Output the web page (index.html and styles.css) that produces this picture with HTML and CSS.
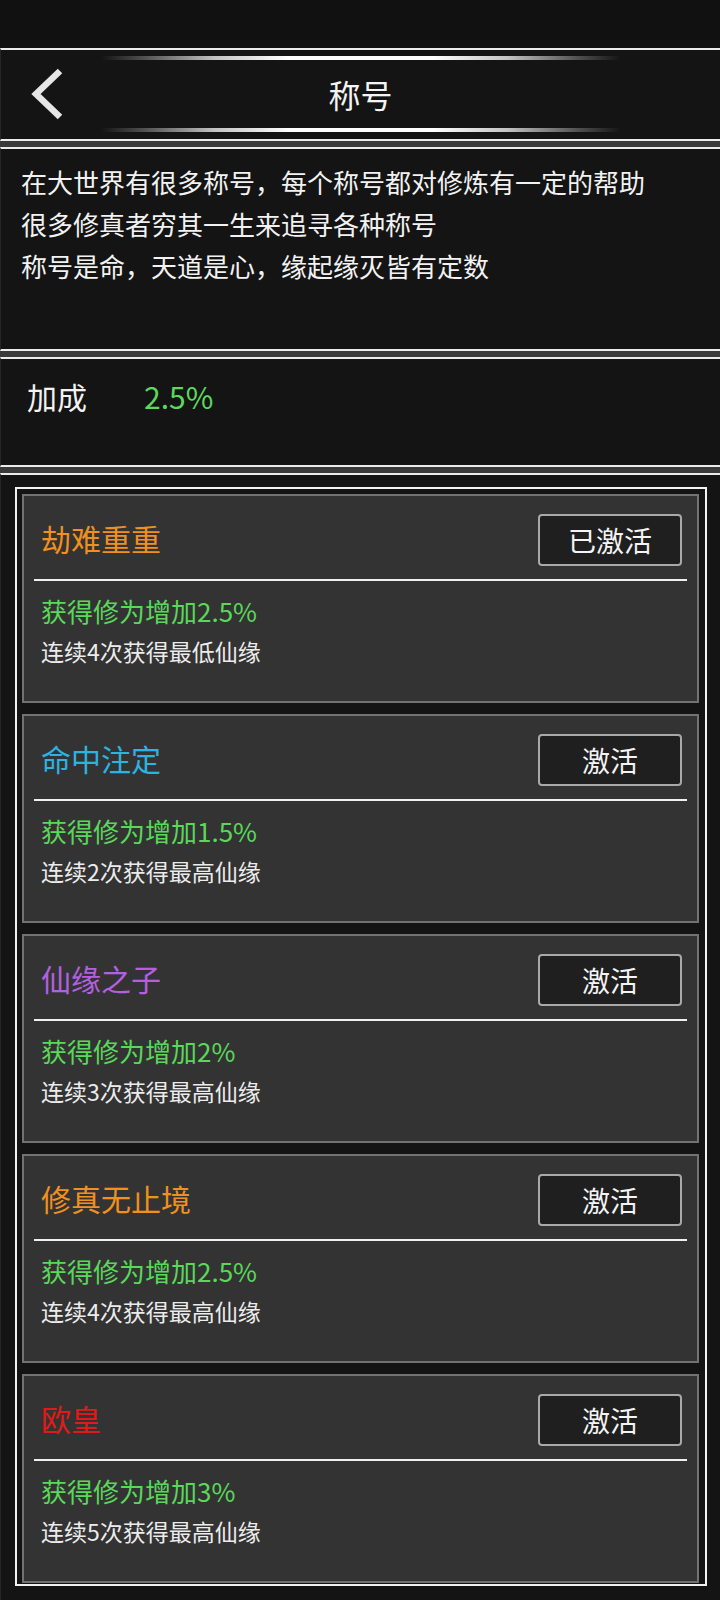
FILE: index.html
```html
<!DOCTYPE html>
<html lang="zh-CN">
<head>
<meta charset="utf-8">
<title>称号</title>
<link rel="stylesheet" href="styles.css">
</head>
<body>
<div class="screen">
  <div class="statusbar"></div>
  <div class="stack">
    <header class="panel header">
      <div class="glow"></div>
      <div class="title-row">
        <svg class="back" width="34" height="52" viewBox="0 0 34 52" aria-hidden="true">
          <polyline points="30,3 6,26 30,49" fill="none" stroke="#e6e6e6" stroke-width="6.5" stroke-linejoin="miter" stroke-linecap="butt"/>
        </svg>
        <h1 class="title">称号</h1>
        <span class="spacer"></span>
      </div>
      <div class="glow"></div>
    </header>

    <section class="panel desc">
      <p class="desc-line">在大世界有很多称号，每个称号都对修炼有一定的帮助</p>
      <p class="desc-line">很多修真者穷其一生来追寻各种称号</p>
      <p class="desc-line">称号是命，天道是心，缘起缘灭皆有定数</p>
    </section>

    <section class="panel bonus">
      <span class="bonus-label">加成</span>
      <span class="bonus-value">2.5%</span>
    </section>

    <section class="panel list">
      <div class="frame">
        <div class="card">
          <div class="card-head">
            <span class="card-title orange">劫难重重</span>
            <button class="btn">已激活</button>
          </div>
          <div class="sep"></div>
          <div class="card-body">
            <p class="effect">获得修为增加2.5%</p>
            <p class="cond">连续4次获得最低仙缘</p>
          </div>
        </div>

        <div class="card">
          <div class="card-head">
            <span class="card-title cyan">命中注定</span>
            <button class="btn">激活</button>
          </div>
          <div class="sep"></div>
          <div class="card-body">
            <p class="effect">获得修为增加1.5%</p>
            <p class="cond">连续2次获得最高仙缘</p>
          </div>
        </div>

        <div class="card">
          <div class="card-head">
            <span class="card-title purple">仙缘之子</span>
            <button class="btn">激活</button>
          </div>
          <div class="sep"></div>
          <div class="card-body">
            <p class="effect">获得修为增加2%</p>
            <p class="cond">连续3次获得最高仙缘</p>
          </div>
        </div>

        <div class="card">
          <div class="card-head">
            <span class="card-title orange">修真无止境</span>
            <button class="btn">激活</button>
          </div>
          <div class="sep"></div>
          <div class="card-body">
            <p class="effect">获得修为增加2.5%</p>
            <p class="cond">连续4次获得最高仙缘</p>
          </div>
        </div>

        <div class="card">
          <div class="card-head">
            <span class="card-title red">欧皇</span>
            <button class="btn">激活</button>
          </div>
          <div class="sep"></div>
          <div class="card-body">
            <p class="effect">获得修为增加3%</p>
            <p class="cond">连续5次获得最高仙缘</p>
          </div>
        </div>
      </div>
    </section>
  </div>
</div>
</body>
</html>
```

FILE: styles.css
```css
* {
  box-sizing: border-box;
}

html, body {
  margin: 0;
  padding: 0;
  background: #111111;
}

body {
  font-family: "Noto Sans CJK SC", "Noto Sans", sans-serif;
  color: #f0f0f0;
}

p, h1 {
  margin: 0;
}

.screen {
  width: 720px;
  height: 1600px;
  overflow: hidden;
  display: flex;
  flex-direction: column;
}

.statusbar {
  height: 48px;
  flex: none;
  background: #111111;
}

.stack {
  flex: 1;
  display: flex;
  flex-direction: column;
  gap: 6px;
  background: #3a3a3a;
}

.panel {
  background: #141414;
  border-top: 2px solid #ececec;
  border-bottom: 2px solid #ececec;
  border-left: 1px solid #262626;
  flex: none;
}

/* header */
.header {
  height: 93px;
  padding: 6px 0 7px;
  display: flex;
  flex-direction: column;
}

.glow {
  width: 520px;
  height: 4px;
  margin: 0 auto;
  flex: none;
  border-radius: 2px;
  background: linear-gradient(90deg,
    rgba(255,255,255,0) 0%,
    rgba(255,255,255,0.25) 8%,
    rgba(255,255,255,0.75) 22%,
    #ffffff 36%,
    #ffffff 64%,
    rgba(255,255,255,0.75) 78%,
    rgba(255,255,255,0.25) 92%,
    rgba(255,255,255,0) 100%);
  filter: blur(0.5px);
}

.title-row {
  flex: 1;
  display: grid;
  grid-template-columns: 1fr auto 1fr;
  align-items: center;
}

.back {
  display: block;
  margin-left: 29px;
}

.title {
  font-size: 32px;
  font-weight: 400;
  color: #f4f4f4;
  line-height: 1;
}

/* description */
.desc {
  height: 204px;
  padding: 12px 20px 0;
}

.desc-line {
  font-size: 26px;
  line-height: 42px;
  color: #f2f2f2;
}

/* bonus */
.bonus {
  height: 110px;
  padding: 17px 26px 0;
  display: flex;
  align-items: flex-start;
  gap: 57px;
}

.bonus-label,
.bonus-value {
  font-size: 30px;
  line-height: 40px;
}

.bonus-label {
  color: #f2f2f2;
}

.bonus-value {
  color: #5cd85c;
}

/* list */
.list {
  flex: 1;
  border-bottom: none;
  padding: 12px 13px 0 14px;
}

.frame {
  border: 2px solid #f2f2f2;
  padding: 5px 6px 1px 5px;
  display: flex;
  flex-direction: column;
  gap: 11px;
}

.card {
  height: 209px;
  background: #333333;
  border: 2px solid #727272;
  display: flex;
  flex-direction: column;
}

.card-head {
  display: flex;
  justify-content: space-between;
  align-items: center;
  padding: 18px 15px 0 17px;
}

.card-title {
  font-size: 30px;
  line-height: 30px;
  padding-bottom: 4px;
}

.orange { color: #f0901e; }
.cyan { color: #2bb3e2; }
.purple { color: #b360e0; }
.red { color: #e01a1a; }

.btn {
  width: 144px;
  height: 52px;
  border: 2px solid #a9a9a9;
  border-radius: 4px;
  background: #1f1f1f;
  color: #f4f4f4;
  font-family: "Noto Sans CJK SC", "Noto Sans", sans-serif;
  font-size: 28px;
  line-height: 1;
  padding: 0;
}

.sep {
  height: 2px;
  margin: 13px 10px 0;
  background: #f0f0f0;
}

.card-body {
  padding: 10px 17px 0;
}

.effect {
  font-size: 26px;
  line-height: 40px;
  color: #5ad85a;
}

.cond {
  font-size: 23px;
  line-height: 40px;
  color: #ececec;
}
```
